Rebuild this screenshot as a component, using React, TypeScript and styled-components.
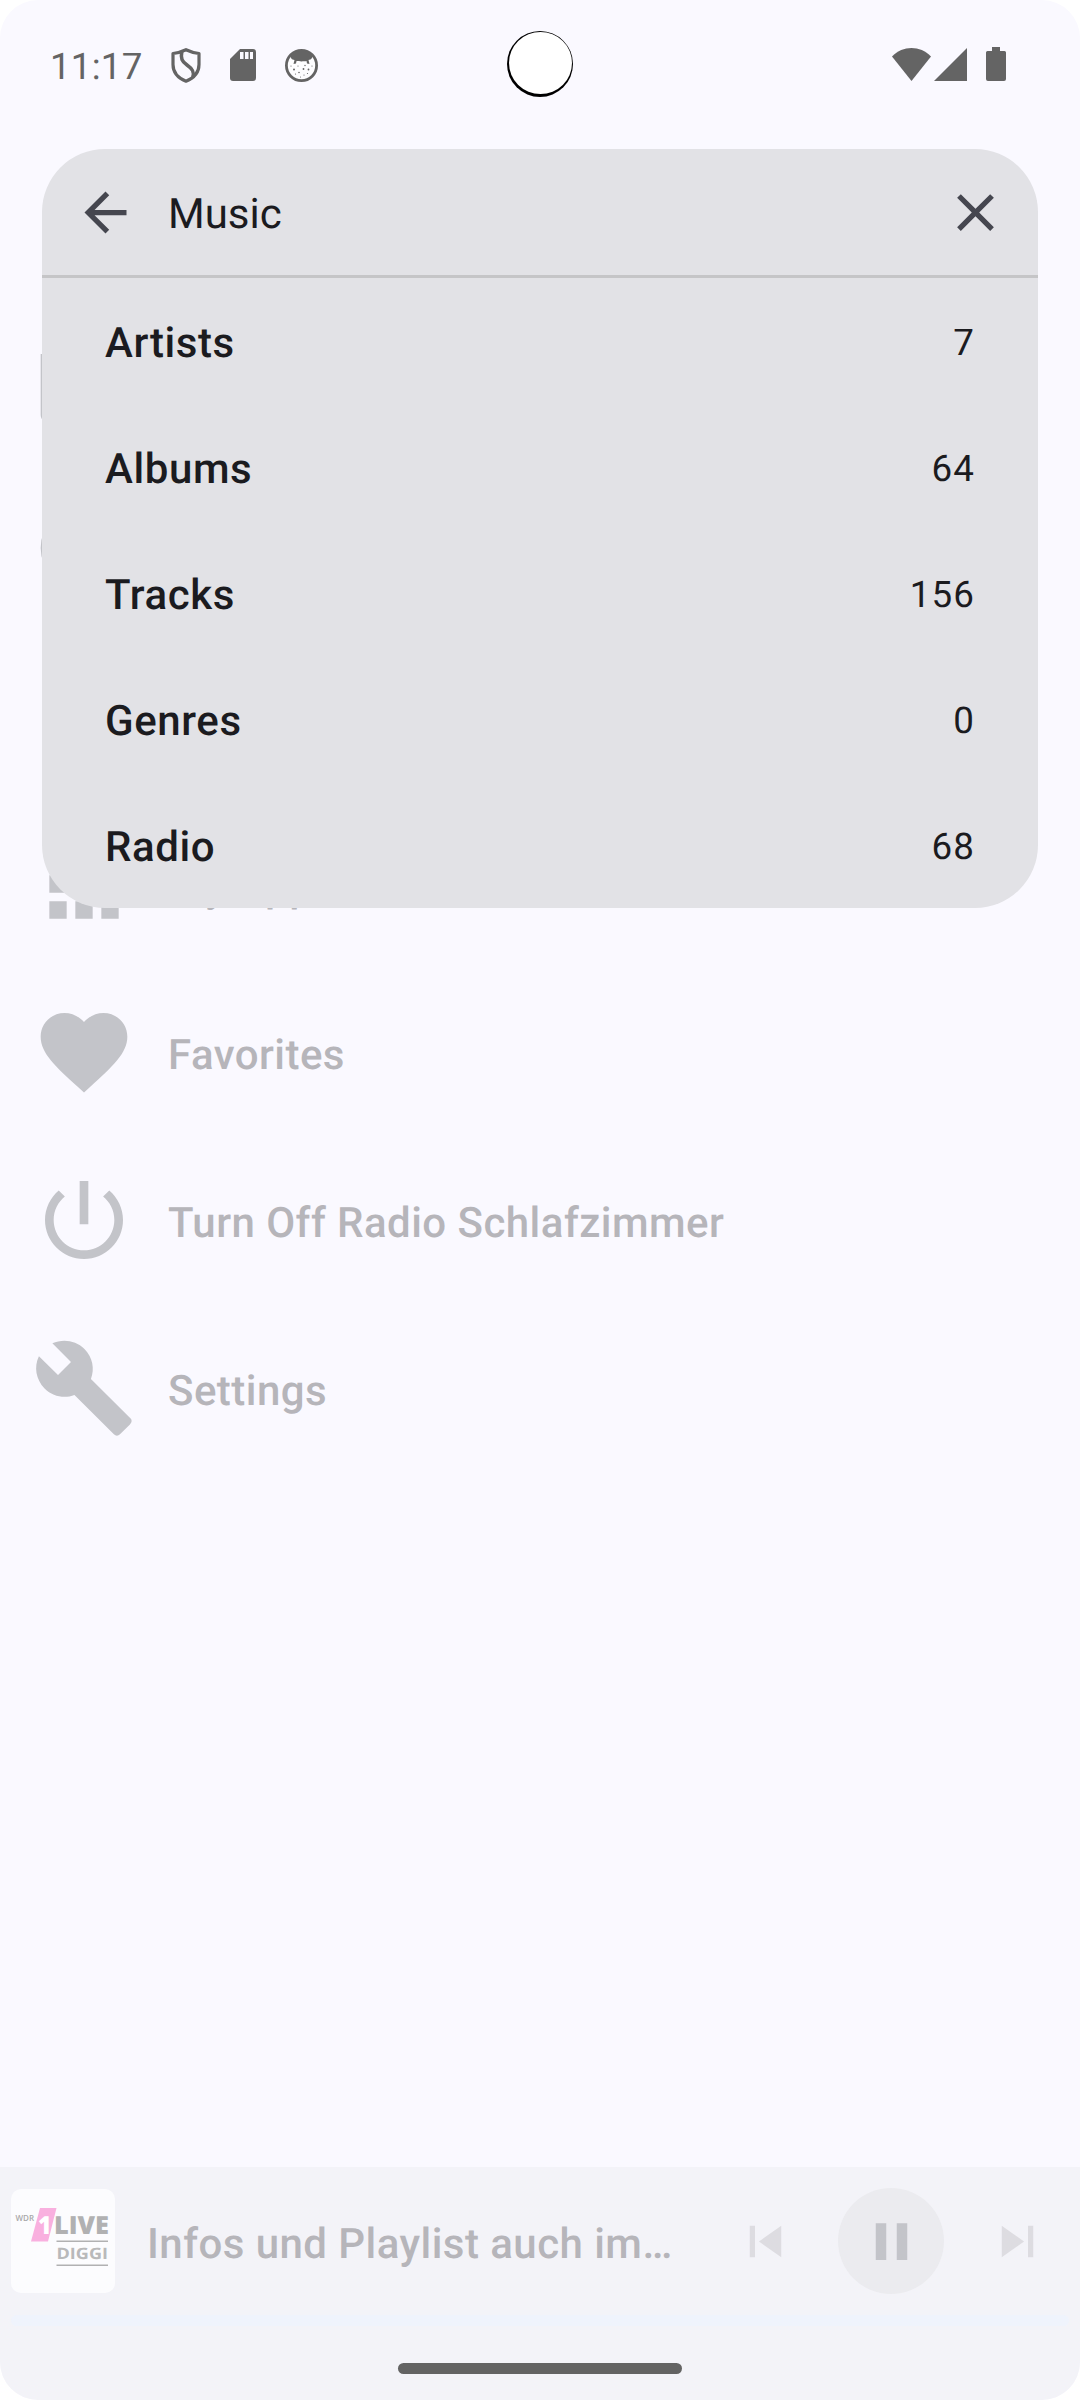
import React from "react";
import styled, { createGlobalStyle } from "styled-components";

const Global = createGlobalStyle`
  html, body { margin: 0; padding: 0; background: #ffffff; }
  * { box-sizing: border-box; }
`;

const Screen = styled.div`
  position: relative;
  display: flex;
  flex-direction: column;
  width: 1080px;
  height: 2400px;
  overflow: hidden;
  border-radius: 38px;
  background: #faf9ff;
  font-family: Roboto, "Liberation Sans", sans-serif;
  text-rendering: geometricPrecision;
`;

const StatusBar = styled.header`
  display: flex;
  align-items: center;
  height: 128px;
  padding: 0 74px 0 50px;
  flex: none;
`;

const Clock = styled.span`
  font-size: 36.75px;
  line-height: 44px;
  letter-spacing: 0.2px;
  color: #646464;
  width: 121px;
  padding-top: 5px;
`;

const StatusIcons = styled.div`
  display: flex;
  align-items: center;
  gap: 29px;
  flex: 1;
  padding-top: 2px;
`;

const Connectivity = styled.div`
  display: flex;
  align-items: center;
  gap: 3px;
`;

const BatterySlot = styled.span`
  display: flex;
  margin-left: 16px;
`;

const Camera = styled.div`
  position: absolute;
  left: 507px;
  top: 31px;
  width: 66px;
  height: 66px;
  border-radius: 50%;
  background: #000000;
  &::after {
    content: "";
    position: absolute;
    left: 2px;
    top: 0.8px;
    width: 63px;
    height: 61.8px;
    border-radius: 50%;
    background: #ffffff;
  }
`;

const Menu = styled.ul`
  list-style: none;
  margin: 0;
  padding: 168px 0 0;
  flex: 1;
`;

const MenuRow = styled.li`
  display: flex;
  align-items: center;
  gap: 32px;
  height: 168px;
  padding-left: 32px;
  color: #c3c4c9;
`;

const MenuLabel = styled.span`
  font-size: 42px;
  font-weight: 500;
  line-height: 63px;
  letter-spacing: 0.46px;
  padding-top: 7px;
  color: #b6b5ba;
  white-space: nowrap;
`;

const Panel = styled.section`
  position: absolute;
  left: 42px;
  top: 149px;
  width: 996px;
  height: 759px;
  border-radius: 63px;
  overflow: hidden;
  background: #e2e2e6;
  color: #1b1b1f;
`;

const PanelHeader = styled.div`
  display: flex;
  align-items: center;
  height: 129px;
  padding: 0 31px 0 32px;
  border-bottom: 3px solid #c5c5c7;
  color: #45464f;
`;

const Query = styled.span`
  flex: 1;
  margin-left: 31px;
  padding-top: 5px;
  font-size: 42px;
  line-height: 63px;
  color: #1b1b1f;
`;

const ResultRow = styled.div`
  display: flex;
  align-items: center;
  justify-content: space-between;
  height: 126px;
  padding: 0 63px;
`;

const ResultName = styled.span`
  font-size: 42px;
  font-weight: 500;
  line-height: 63px;
  letter-spacing: 0.6px;
  padding-top: 5px;
`;

const ResultCount = styled.span`
  font-size: 36.75px;
  line-height: 52px;
  letter-spacing: 1.1px;
  padding-top: 3px;
`;

const Player = styled.footer`
  display: flex;
  flex-direction: column;
  height: 233px;
  flex: none;
  background: #f3f3f8;
`;

const PlayerRow = styled.div`
  display: flex;
  align-items: center;
  height: 148px;
  padding-left: 11px;
`;

const Artwork = styled.div`
  width: 104px;
  height: 104px;
  border-radius: 10px;
  overflow: hidden;
  background: #fcfcfe;
  flex: none;
`;

const TrackTitle = styled.span`
  flex: 1;
  min-width: 0;
  margin-left: 32px;
  padding-top: 7px;
  font-size: 42px;
  font-weight: 500;
  line-height: 63px;
  letter-spacing: 0.45px;
  color: #b6b5ba;
  white-space: nowrap;
`;

const ControlButton = styled.button`
  display: flex;
  align-items: center;
  justify-content: center;
  width: 126px;
  height: 126px;
  padding: 0;
  border: 0;
  background: none;
  color: #dddce1;
`;

const PauseDisc = styled.span`
  display: flex;
  align-items: center;
  justify-content: center;
  width: 106px;
  height: 106px;
  border-radius: 50%;
  background: #ebebef;
  color: #c3c4c9;
`;

const Progress = styled.div`
  height: 11px;
  margin: 0 11px;
  border-radius: 6px;
  background: #eff3fc;
`;

const GestureHandle = styled.div`
  width: 284px;
  height: 11px;
  margin: 37px auto 0;
  border-radius: 6px;
  background: #636363;
`;

const Icon = ({ d, size }: { d: string; size: number }) => (
  <svg width={size} height={size} viewBox="0 0 24 24" fill="currentColor">
    <path d={d} />
  </svg>
);

const paths = {
  back: "M20 11H7.83l5.59-5.59L12 4l-8 8 8 8 1.41-1.41L7.83 13H20v-2z",
  close: "M19 6.41L17.59 5 12 10.59 6.41 5 5 6.41 10.59 12 5 17.59 6.41 19 12 13.41 17.59 19 19 17.59 13.41 12z",
  library:
    "M20 2H8c-1.1 0-2 .9-2 2v12c0 1.1.9 2 2 2h12c1.1 0 2-.9 2-2V4c0-1.1-.9-2-2-2zm-2 5h-3v5.5c0 1.38-1.12 2.5-2.5 2.5S10 13.88 10 12.5s1.12-2.5 2.5-2.5c.57 0 1.08.19 1.5.51V5h4v2zM4 6H2v14c0 1.1.9 2 2 2h14v-2H4V6z",
  globe: "M12 2a10 10 0 1 0 0 20a10 10 0 0 0 0-20zm0 2a8 8 0 1 1 0 16a8 8 0 0 1 0-16z",
  playlist: "M15 6H3v2h12V6zm0 4H3v2h12v-2zM3 16h8v-2H3v2z",
  apps: "M4 8h4V4H4v4zm6 12h4v-4h-4v4zm-6 0h4v-4H4v4zm0-6h4v-4H4v4zm6 0h4v-4h-4v4zm6-10v4h4V4h-4zm-6 4h4V4h-4v4zm6 6h4v-4h-4v4zm0 6h4v-4h-4v4z",
  heart:
    "M12 21.35l-1.45-1.32C5.4 15.36 2 12.28 2 8.5 2 5.42 4.42 3 7.5 3c1.74 0 3.41.81 4.5 2.09C13.09 3.81 14.76 3 16.5 3 19.58 3 22 5.42 22 8.5c0 3.78-3.4 6.86-8.55 11.54L12 21.35z",
  power:
    "M13 3h-2v10h2V3zm4.83 2.17l-1.42 1.42C17.99 7.86 19 9.81 19 12c0 3.87-3.13 7-7 7s-7-3.13-7-7c0-2.19 1.01-4.14 2.58-5.42L6.17 5.17C4.23 6.82 3 9.26 3 12c0 4.97 4.03 9 9 9s9-4.03 9-9c0-2.74-1.23-5.18-3.17-6.83z",
  wrench:
    "M22.7 19l-9.1-9.1c.9-2.3.4-5-1.5-6.9-2-2-5-2.4-7.4-1.3L9 6 6 9 1.6 4.7C.4 7.1.9 10.1 2.9 12.1c1.9 1.9 4.6 2.4 6.9 1.5l9.1 9.1c.4.4 1 .4 1.4 0l2.3-2.3c.5-.4.5-1.1.1-1.4z",
  previous: "M6 6h2v12H6zm3.5 6l8.5 6V6z",
  next: "M6 18l8.5-6L6 6v12zM16 6v12h2V6h-2z",
  pause: "M6 19h4V5H6v14zm8-14v14h4V5h-4z",
};

const ShieldIcon = () => (
  <svg width="30" height="35" viewBox="0 0 30 35" fill="none" stroke="#646464" strokeWidth="3.2">
    <path d="M15 1.7C11 3.6 6.5 4.9 2 5.5V16.500C2 24.500 7 30 15 33.200C23 30 28 24.500 28 16.500V5.500C23.500 4.900 19 3.600 15 1.700z" strokeLinejoin="round" />
    <path d="M10.800 3.500C9.500 10.500 11 13.500 16 17C21.500 20.800 23.500 24 21.800 29" strokeWidth="3.600" />
  </svg>
);

const SdCardIcon = () => (
  <svg width="26" height="32" viewBox="0 0 26 32">
    <path d="M10 0H23a3 3 0 0 1 3 3V29a3 3 0 0 1-3 3H3a3 3 0 0 1-3-3V10z" fill="#646464" />
    <path d="M10 3h3.500v7H10zM15 3h3.500v7H15zM20 3h3v7h-3z" fill="#faf9ff" />
  </svg>
);

const FaceIcon = () => (
  <svg width="33" height="33" viewBox="0 0 33 33">
    <circle cx="16.500" cy="16.500" r="15.100" fill="#fdfdff" stroke="#646464" strokeWidth="2.800" />
    <path
      d="M6 6.500C9 3 12 2 16.500 2S24 3 27 6.500C28 9 26 10.800 23.500 11L24.500 15L22 14.500L21.500 12C19 12.500 14 12.500 11.500 12L11 14.500L8.500 15L9.500 11C7 10.800 5 9 6 6.500z"
      fill="#646464"
    />
    <g fill="#646464">
      <circle cx="9" cy="20.500" r="1" />
      <circle cx="18.500" cy="20" r="0.900" />
      <circle cx="23.500" cy="20.500" r="0.900" />
      <circle cx="13" cy="17" r="0.600" />
      <circle cx="20" cy="16.500" r="0.700" />
      <circle cx="14" cy="23.500" r="0.800" />
      <circle cx="10.500" cy="25" r="0.600" />
      <circle cx="19" cy="26" r="0.600" />
      <circle cx="22.500" cy="24.500" r="0.600" />
      <circle cx="6" cy="17" r="0.600" />
      <circle cx="27" cy="17" r="0.600" />
      <circle cx="15.500" cy="28" r="0.500" />
    </g>
  </svg>
);

const WifiIcon = () => (
  <svg width="39" height="33" viewBox="0 0 39 33" fill="#646464">
    <path d="M0 8.500C11 -2.800 28 -2.800 39 8.500L19.500 33z" />
  </svg>
);

const SignalIcon = () => (
  <svg width="33" height="33" viewBox="0 0 33 33" fill="#646464">
    <path d="M33 0V33H0z" />
  </svg>
);

const BatteryIcon = () => (
  <svg width="20" height="34" viewBox="0 0 20 34" fill="#646464">
    <path d="M6 0h8v4h4.500q1.500 0 1.500 1.500V32q0 2-2 2H2q-2 0-2-2V5.500Q0 4 1.500 4H6z" />
  </svg>
);

const StationLogo = () => (
  <svg width="104" height="104" viewBox="0 0 104 104" fontFamily='"Open Sans", "Noto Sans", sans-serif'>
    <text x="4.500" y="32" fontSize="8.500" fontWeight="600" fill="#a9a9aa" textLength="18.500" lengthAdjust="spacingAndGlyphs">
      WDR
    </text>
    <path d="M29 19H45.500L37 52.500H20z" fill="#f9b0df" />
    <text x="27" y="44.500" fontSize="25" fontWeight="800" fill="#ffffff" textLength="13.500" lengthAdjust="spacingAndGlyphs">
      1
    </text>
    <text x="43" y="44.500" fontSize="25" fontWeight="800" fill="#b1b1b2" textLength="55" lengthAdjust="spacingAndGlyphs">
      LIVE
    </text>
    <path d="M45.500 51.500H97v1.400H45.500zM45.500 75.500H97v1.400H45.500z" fill="#b1b1b2" />
    <text x="45.500" y="70.300" fontSize="15.700" fontWeight="700" fill="#b9b9ba" textLength="51.500" lengthAdjust="spacingAndGlyphs">
      DIGGI
    </text>
  </svg>
);

const menu = [
  { icon: paths.library, label: "" },
  { icon: paths.globe, label: "" },
  { icon: paths.playlist, label: "" },
  { icon: paths.apps, label: "My Apps" },
  { icon: paths.heart, label: "Favorites" },
  { icon: paths.power, label: "Turn Off Radio Schlafzimmer" },
  { icon: paths.wrench, label: "Settings" },
];

const results = [
  { name: "Artists", count: 7 },
  { name: "Albums", count: 64 },
  { name: "Tracks", count: 156 },
  { name: "Genres", count: 0 },
  { name: "Radio", count: 68 },
];

export default function App() {
  return (
    <>
      <Global />
      <Screen>
        <StatusBar>
          <Clock>11:17</Clock>
          <StatusIcons>
            <ShieldIcon />
            <SdCardIcon />
            <FaceIcon />
          </StatusIcons>
          <Connectivity>
            <WifiIcon />
            <SignalIcon />
            <BatterySlot>
              <BatteryIcon />
            </BatterySlot>
          </Connectivity>
        </StatusBar>
        <Menu>
          {menu.map((item, index) => (
            <MenuRow key={index}>
              <Icon d={item.icon} size={104} />
              {item.label && <MenuLabel>{item.label}</MenuLabel>}
            </MenuRow>
          ))}
        </Menu>
        <Player>
          <PlayerRow>
            <Artwork>
              <StationLogo />
            </Artwork>
            <TrackTitle>Infos und Playlist auch im…</TrackTitle>
            <ControlButton aria-label="Previous">
              <Icon d={paths.previous} size={63} />
            </ControlButton>
            <ControlButton aria-label="Pause">
              <PauseDisc>
                <Icon d={paths.pause} size={63} />
              </PauseDisc>
            </ControlButton>
            <ControlButton aria-label="Next">
              <Icon d={paths.next} size={63} />
            </ControlButton>
          </PlayerRow>
          <Progress />
          <GestureHandle />
        </Player>
        <Panel>
          <PanelHeader>
            <Icon d={paths.back} size={63} />
            <Query>Music</Query>
            <Icon d={paths.close} size={63} />
          </PanelHeader>
          {results.map((row) => (
            <ResultRow key={row.name}>
              <ResultName>{row.name}</ResultName>
              <ResultCount>{row.count}</ResultCount>
            </ResultRow>
          ))}
        </Panel>
        <Camera />
      </Screen>
    </>
  );
}
